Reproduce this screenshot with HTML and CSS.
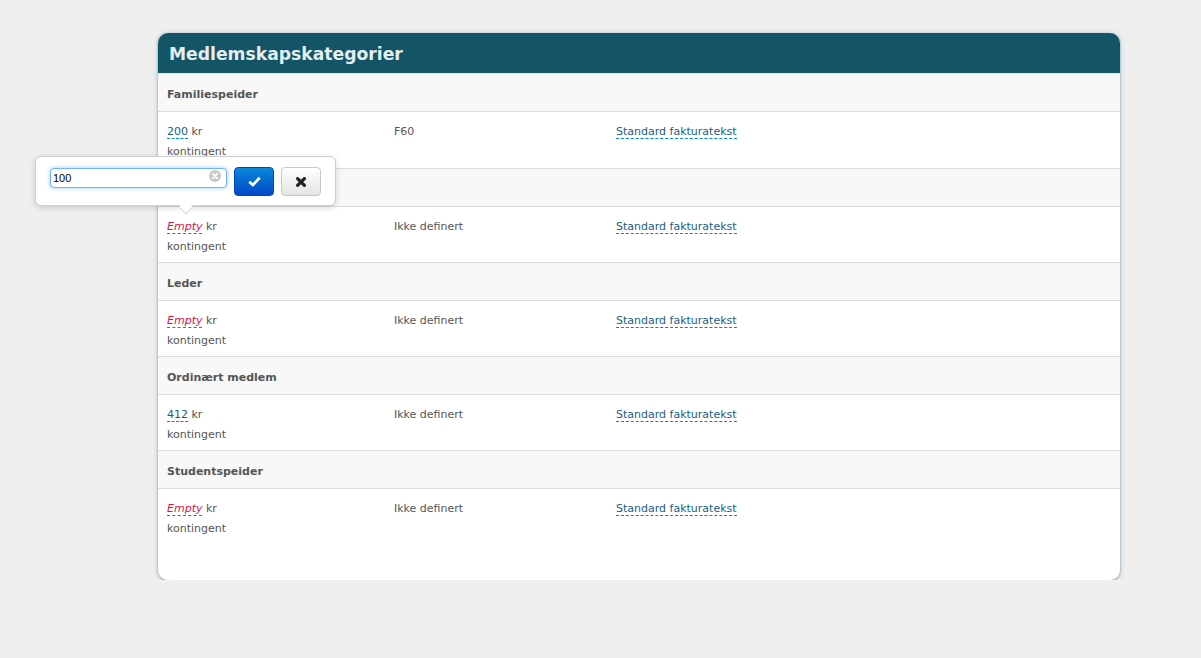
FILE: index.html
```html
<!DOCTYPE html>
<html lang="no">
<head>
<meta charset="utf-8">
<title>Medlemskapskategorier</title>
<link rel="stylesheet" href="styles.css">
</head>
<body>
<div class="page">
  <div class="panel">
    <div class="panel-head"><h2>Medlemskapskategorier</h2></div>
    <div class="panel-body">
      <div class="cat-head">Familiespeider</div>
      <div class="cat-row cat-row-first">
        <div class="col"><a class="editable">200</a> kr<br>kontingent</div>
        <div class="col">F60</div>
        <div class="col"><a class="editable link">Standard fakturatekst</a></div>
      </div>
      <div class="cat-head">Familiespeider</div>
      <div class="cat-row">
        <div class="col"><a class="editable empty">Empty</a> kr<br>kontingent</div>
        <div class="col">Ikke definert</div>
        <div class="col"><a class="editable link">Standard fakturatekst</a></div>
      </div>
      <div class="cat-head">Leder</div>
      <div class="cat-row">
        <div class="col"><a class="editable empty">Empty</a> kr<br>kontingent</div>
        <div class="col">Ikke definert</div>
        <div class="col"><a class="editable link">Standard fakturatekst</a></div>
      </div>
      <div class="cat-head">Ordinært medlem</div>
      <div class="cat-row">
        <div class="col"><a class="editable">412</a> kr<br>kontingent</div>
        <div class="col">Ikke definert</div>
        <div class="col"><a class="editable link">Standard fakturatekst</a></div>
      </div>
      <div class="cat-head">Studentspeider</div>
      <div class="cat-row">
        <div class="col"><a class="editable empty">Empty</a> kr<br>kontingent</div>
        <div class="col">Ikke definert</div>
        <div class="col"><a class="editable link">Standard fakturatekst</a></div>
      </div>
    </div>
  </div>
</div>

<div class="popover">
  <div class="input-wrap">
    <input class="pop-input" type="text" value="100">
    <span class="clear"><svg width="12" height="12" viewBox="0 0 12 12"><circle cx="6" cy="6" r="6" fill="#c8c8c8"/><path d="M3.8 3.8 L8.2 8.2 M8.2 3.8 L3.8 8.2" stroke="#fff" stroke-width="1.8" stroke-linecap="round"/></svg></span>
  </div>
  <button class="btn btn-ok"><svg width="13" height="11" viewBox="0 0 13 11"><path d="M1.3 5.8 L4.8 9 L11.7 1.8" fill="none" stroke="#fff" stroke-width="2.8" stroke-linejoin="round"/></svg></button>
  <button class="btn btn-cancel"><svg width="10" height="10" viewBox="0 0 10 10"><path d="M1.6 1.6 L8.4 8.4 M8.4 1.6 L1.6 8.4" stroke="#222" stroke-width="3.2" stroke-linecap="round"/></svg></button>
  <span class="arrow"></span>
</div>
</body>
</html>
```
FILE: styles.css
```css
html, body {
  margin: 0;
  padding: 0;
  background: #efefef;
  font-family: "DejaVu Sans", Verdana, sans-serif;
}
.page {
  padding: 33px 0 0 158px;
  width: 962px;
}
.panel {
  background: #fff;
  border-radius: 10px;
  box-shadow: 0 1px 2px 1px rgba(120, 150, 170, 0.45), 0 0 6px rgba(150, 170, 185, 0.35);
  overflow: hidden;
  padding-bottom: 36px;
}
.panel-head {
  background: #135566;
  height: 40px;
  display: flex;
  align-items: center;
  padding: 2px 0 0 11px;
  box-sizing: border-box;
}
.panel-head h2 {
  margin: 0;
  font-size: 17.2px;
  font-weight: bold;
  color: #e4eef1;
}
.cat-head {
  background: #f8f8f8;
  border-top: 1px solid #dcdcdc;
  border-bottom: 1px solid #dcdcdc;
  padding: 11px 9px 7px;
  line-height: 19px;
  font-size: 11px;
  font-weight: bold;
  color: #555;
}
.cat-head:first-child {
  border-top-color: #e8e8e8;
}
.cat-row {
  display: grid;
  grid-template-columns: 227px 222px 1fr;
  padding: 10px 9px 5px;
  font-size: 11px;
  line-height: 20px;
  color: #555;
}
.cat-row-first {
  padding-bottom: 6px;
}
.editable {
  color: #1a5e82;
  border-bottom: 1px dashed #0088cc;
  text-decoration: none;
  cursor: pointer;
}
.editable.empty {
  color: #dd1144;
  font-style: italic;
}
.popover {
  position: absolute;
  left: 35px;
  top: 156px;
  width: 301px;
  height: 50px;
  background: #fff;
  border: 1px solid #cfcfcf;
  border-radius: 6px;
  box-shadow: 0 2px 6px rgba(0, 0, 0, 0.15);
  box-sizing: border-box;
  display: flex;
  align-items: flex-start;
  padding: 10px 0 0 14px;
}
.input-wrap {
  position: relative;
  width: 177px;
  height: 20px;
}
.pop-input {
  box-sizing: border-box;
  width: 177px;
  height: 20px;
  margin: 0;
  padding: 0 20px 0 2px;
  border: 1px solid #72b7f2;
  border-radius: 4px;
  box-shadow: 0 0 4px rgba(82, 168, 236, 0.6);
  font-family: "Liberation Sans", Arial, sans-serif;
  font-size: 11px;
  color: #000;
  outline: none;
}
.clear {
  position: absolute;
  right: 6px;
  top: 3px;
  width: 12px;
  height: 12px;
  display: block;
}
.clear svg { display: block; }
.btn {
  box-sizing: border-box;
  width: 40px;
  height: 29px;
  border-radius: 4px;
  display: flex;
  align-items: center;
  justify-content: center;
  padding: 0;
  margin: 0;
}
.btn-ok {
  margin-left: 7px;
  background: linear-gradient(#0a88da, #0048c8);
  border: 1px solid #0049b8;
}
.btn-cancel {
  margin-left: 7px;
  background: linear-gradient(#ffffff, #e4e4e4);
  border: 1px solid #c8c8c8;
}
.arrow {
  position: absolute;
  left: 143px;
  bottom: -9px;
  width: 14px;
  height: 14px;
  background: #fff;
  border-right: 1px solid #cfcfcf;
  border-bottom: 1px solid #cfcfcf;
  transform: rotate(45deg) scale(0.72, 0.72);
  box-sizing: border-box;
}
```
